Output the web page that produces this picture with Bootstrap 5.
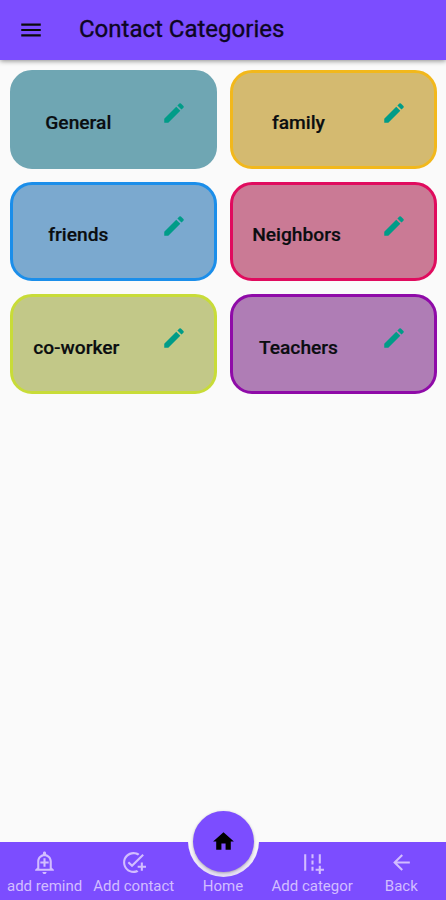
<!DOCTYPE html>
<html lang="en">
<head>
<meta charset="utf-8">
<meta name="viewport" content="width=device-width, initial-scale=1">
<title>Contact Categories</title>
<link href="https://cdn.jsdelivr.net/npm/bootstrap@5.3.0/dist/css/bootstrap.min.css" rel="stylesheet">
<style>
body{font-family:Roboto,"Liberation Sans",sans-serif;background:#fafafa;color:#0a0a0a}
svg{display:block;fill:currentColor}
.top-bar{height:60px;background:#7c4dff;padding:0 18px;box-shadow:0 1px 5px rgba(0,0,0,.45);z-index:2}
.top-bar svg{margin-top:-1px}
.top-title{font-size:24px;font-weight:400;-webkit-text-stroke:.35px;margin:-2px 0 0 35px;line-height:1;color:#0d0622}
.cat-grid{display:grid;grid-template-columns:207px 207px;gap:12.8px 13.2px;padding:9.5px 0 0 10.3px}
.cat-tile{height:99.5px;border:3px solid;border-radius:22px}
.cat-name{width:130px;margin-top:8.4px;font-size:19.2px;font-weight:500;-webkit-text-stroke:.2px;color:#0a0d10}
.coworker .cat-name,.neighbors .cat-name{padding-right:4px}
.cat-edit{color:#009c88;margin:-12px 0 0 17.5px}
.general{background:#6fa6b3;border-color:#6fa6b3}
.family{background:#d4ba70;border-color:#f2b81c}
.friends{background:#7ba9cf;border-color:#1b8eea}
.neighbors{background:#ca7a95;border-color:#e00b5e}
.coworker{background:#c2c888;border-color:#c8dc38}
.teachers{background:#af7db5;border-color:#8f0ba8}
.bottom-bar{height:58px;background:#7c4dff;color:#d2bdff}
.bottom-item{width:20%;padding-top:8px;font-size:15px;line-height:18px;color:inherit;text-decoration:none}
.bottom-item svg{margin-bottom:2px}
.home-space{height:27px}
.home-button{left:188px;top:-36px;width:71px;height:71px;background:linear-gradient(#fafafa 55%,#e4dcf5);color:#000;padding:5px}
.home-disc{background:#7c4dff;box-shadow:0 1px 3px rgba(0,0,0,.3)}
</style>
<script src="https://cdn.jsdelivr.net/npm/bootstrap@5.3.0/dist/js/bootstrap.bundle.min.js"></script>
</head>
<body>
<div class="d-flex flex-column vh-100 overflow-hidden">
<header class="top-bar d-flex align-items-center flex-shrink-0 position-relative">
<svg width="26" height="26" viewBox="0 0 24 24"><path d="M3 18h18v-2H3v2zm0-5h18v-2H3v2zm0-7v2h18V6H3z"/></svg>
<h1 class="top-title">Contact Categories</h1>
</header>
<main class="flex-grow-1">
<div class="cat-grid">
<div class="cat-tile general d-flex align-items-center"><div class="cat-name text-center">General</div><svg class="cat-edit" width="26" height="26" viewBox="0 0 24 24"><path d="M3 17.25V21h3.75L17.81 9.94l-3.75-3.75L3 17.25zM20.71 7.04a1 1 0 0 0 0-1.41l-2.34-2.34a1 1 0 0 0-1.41 0l-1.83 1.83 3.75 3.75 1.83-1.83z"/></svg></div>
<div class="cat-tile family d-flex align-items-center"><div class="cat-name text-center">family</div><svg class="cat-edit" width="26" height="26" viewBox="0 0 24 24"><path d="M3 17.25V21h3.75L17.81 9.94l-3.75-3.75L3 17.25zM20.71 7.04a1 1 0 0 0 0-1.41l-2.34-2.34a1 1 0 0 0-1.41 0l-1.83 1.83 3.75 3.75 1.83-1.83z"/></svg></div>
<div class="cat-tile friends d-flex align-items-center"><div class="cat-name text-center">friends</div><svg class="cat-edit" width="26" height="26" viewBox="0 0 24 24"><path d="M3 17.25V21h3.75L17.81 9.94l-3.75-3.75L3 17.25zM20.71 7.04a1 1 0 0 0 0-1.41l-2.34-2.34a1 1 0 0 0-1.41 0l-1.83 1.83 3.75 3.75 1.83-1.83z"/></svg></div>
<div class="cat-tile neighbors d-flex align-items-center"><div class="cat-name text-center">Neighbors</div><svg class="cat-edit" width="26" height="26" viewBox="0 0 24 24"><path d="M3 17.25V21h3.75L17.81 9.94l-3.75-3.75L3 17.25zM20.71 7.04a1 1 0 0 0 0-1.41l-2.34-2.34a1 1 0 0 0-1.41 0l-1.83 1.83 3.75 3.75 1.83-1.83z"/></svg></div>
<div class="cat-tile coworker d-flex align-items-center"><div class="cat-name text-center">co-worker</div><svg class="cat-edit" width="26" height="26" viewBox="0 0 24 24"><path d="M3 17.25V21h3.75L17.81 9.94l-3.75-3.75L3 17.25zM20.71 7.04a1 1 0 0 0 0-1.41l-2.34-2.34a1 1 0 0 0-1.41 0l-1.83 1.83 3.75 3.75 1.83-1.83z"/></svg></div>
<div class="cat-tile teachers d-flex align-items-center"><div class="cat-name text-center">Teachers</div><svg class="cat-edit" width="26" height="26" viewBox="0 0 24 24"><path d="M3 17.25V21h3.75L17.81 9.94l-3.75-3.75L3 17.25zM20.71 7.04a1 1 0 0 0 0-1.41l-2.34-2.34a1 1 0 0 0-1.41 0l-1.83 1.83 3.75 3.75 1.83-1.83z"/></svg></div>
</div>
</main>
<nav class="bottom-bar d-flex flex-shrink-0 position-relative">
<a href="#" class="bottom-item d-flex flex-column align-items-center text-nowrap"><svg width="25" height="25" viewBox="0 0 24 24"><path d="M10.01 21.01c0 1.1.89 1.99 1.99 1.99s1.99-.89 1.99-1.99h-3.98zM12 6c2.76 0 5 2.24 5 5v7H7v-7c0-2.76 2.24-5 5-5zm0-4.5c-.83 0-1.5.67-1.5 1.5v1.17C7.36 4.85 5 7.65 5 11v6l-2 2v1h18v-1l-2-2v-6c0-3.35-2.36-6.15-5.5-6.83V3c0-.83-.67-1.5-1.5-1.5zM11 8h2v3h3v2h-3v3h-2v-3H8v-2h3z" fill-rule="evenodd"/></svg>add remind</a>
<a href="#" class="bottom-item d-flex flex-column align-items-center text-nowrap"><svg width="25" height="25" viewBox="0 0 24 24"><path d="M22 5.18L10.59 16.6l-4.24-4.24 1.41-1.41 2.83 2.83 10-10L22 5.18zM12 20c-4.41 0-8-3.59-8-8s3.59-8 8-8c1.57 0 3.04.46 4.28 1.25l1.45-1.45C16.1 2.67 14.13 2 12 2 6.48 2 2 6.48 2 12s4.48 10 10 10c1.73 0 3.36-.44 4.78-1.22l-1.5-1.5c-1 .46-2.11.72-3.28.72zm7-5h-3v2h3v3h2v-3h3v-2h-3v-3h-2v3z"/></svg>Add contact</a>
<a href="#" class="bottom-item d-flex flex-column align-items-center text-nowrap"><span class="home-space"></span>Home</a>
<a href="#" class="bottom-item d-flex flex-column align-items-center text-nowrap"><svg width="25" height="25" viewBox="0 0 24 24"><path d="M20 18v-3h-2v3h-3v2h3v3h2v-3h3v-2zM18 4h2v9h-2zM4 4h2v16H4zM11 4h2v4h-2zM11 10h2v4h-2zM11 16h2v4h-2z"/></svg>Add categor</a>
<a href="#" class="bottom-item d-flex flex-column align-items-center text-nowrap"><svg width="25" height="25" viewBox="0 0 24 24"><path d="M20 11H7.83l5.59-5.59L12 4l-8 8 8 8 1.41-1.41L7.83 13H20v-2z"/></svg>Back</a>
<div class="home-button position-absolute rounded-circle"><div class="home-disc w-100 h-100 rounded-circle d-flex align-items-center justify-content-center"><svg width="25" height="25" viewBox="0 0 24 24"><path d="M10 20v-6h4v6h5v-8h3L12 3 2 12h3v8z"/></svg></div></div>
</nav>
</div>
</body>
</html>
